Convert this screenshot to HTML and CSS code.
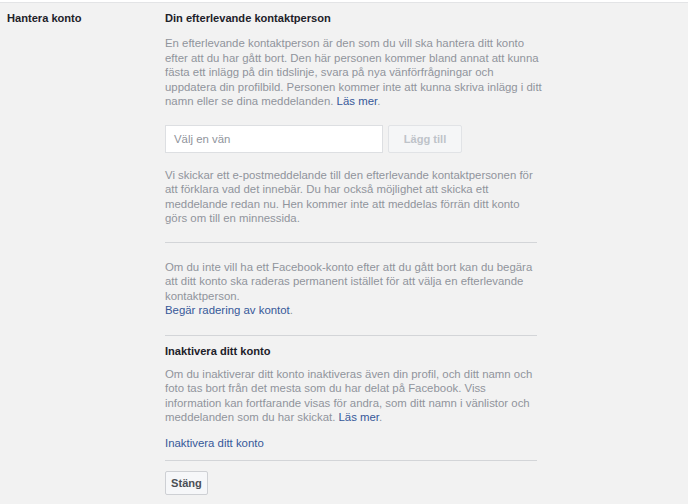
FILE: index.html
```html
<!DOCTYPE html>
<html lang="sv">
<head>
<meta charset="utf-8">
<title>Hantera konto</title>
<link rel="stylesheet" href="styles.css">
</head>
<body>
<div class="page">
  <div class="row">
    <div class="label">Hantera konto</div>
    <div class="content">
      <h3 class="heading">Din efterlevande kontaktperson</h3>
      <p class="text first">En efterlevande kontaktperson är den som du vill ska hantera ditt konto<br>efter att du har gått bort. Den här personen kommer bland annat att kunna<br>fästa ett inlägg på din tidslinje, svara på nya vänförfrågningar och<br>uppdatera din profilbild. Personen kommer inte att kunna skriva inlägg i ditt<br>namn eller se dina meddelanden. <a class="link" href="#">Läs mer</a>.</p>
      <div class="picker">
        <div class="input">Välj en vän</div>
        <button class="btn disabled">Lägg till</button>
      </div>
      <p class="text notice">Vi skickar ett e-postmeddelande till den efterlevande kontaktpersonen för<br>att förklara vad det innebär. Du har också möjlighet att skicka ett<br>meddelande redan nu. Hen kommer inte att meddelas förrän ditt konto<br>görs om till en minnessida.</p>
      <hr class="divider">
      <p class="text delete">Om du inte vill ha ett Facebook-konto efter att du gått bort kan du begära<br>att ditt konto ska raderas permanent istället för att välja en efterlevande<br>kontaktperson.<br><a class="link" href="#">Begär radering av kontot</a>.</p>
      <hr class="divider">
      <h3 class="heading second">Inaktivera ditt konto</h3>
      <p class="text deact">Om du inaktiverar ditt konto inaktiveras även din profil, och ditt namn och<br>foto tas bort från det mesta som du har delat på Facebook. Viss<br>information kan fortfarande visas för andra, som ditt namn i vänlistor och<br>meddelanden som du har skickat. <a class="link" href="#">Läs mer</a>.</p>
      <a class="link action" href="#">Inaktivera ditt konto</a>
      <hr class="divider last">
      <button class="btn close">Stäng</button>
    </div>
  </div>
</div>
</body>
</html>
```
FILE: styles.css
```css
html, body {
  margin: 0;
  padding: 0;
}
body {
  background: #f2f2f2;
  font-family: "Liberation Sans", Arial, sans-serif;
  font-size: 11.4px;
  color: #1d2129;
}
.page {
  border-top: 2px solid #ffffff;
  min-height: 502px;
}
.page::before {
  content: "";
  display: block;
  height: 1px;
  background: #e3e4e6;
}
.row {
  display: flex;
  padding: 7px 0 0 7px;
}
.label {
  width: 158px;
  flex: none;
  font-size: 11.1px;
  font-weight: bold;
  line-height: 16px;
  color: #1d2129;
}
.content {
  width: 372px;
  flex: none;
}
.heading {
  margin: 0;
  font-size: 11.1px;
  font-weight: bold;
  line-height: 16px;
  color: #1d2129;
}
.text {
  margin: 0 -12px 0 0;
  color: #90949c;
  line-height: 14.5px;
  white-space: nowrap;
}
.link {
  color: #365899;
  text-decoration: none;
}
.first {
  margin-top: 10px;
}
.picker {
  display: flex;
  gap: 5px;
  margin-top: 16px;
}
.input {
  height: 26px;
  box-sizing: content-box;
  border: 1px solid #dddfe2;
  background: #ffffff;
  color: #90949c;
  line-height: 26px;
  padding-left: 8px;
  width: 208px;
}
.btn {
  font-family: "Liberation Sans", Arial, sans-serif;
  font-size: 11.1px;
  font-weight: bold;
  border-radius: 2px;
  padding: 0;
  cursor: pointer;
}
.disabled {
  width: 74px;
  height: 28px;
  background: #f5f6f7;
  border: 1px solid #e1e3e6;
  color: #bec3c9;
}
.notice {
  margin-top: 15px;
}
.divider {
  border: 0;
  height: 1px;
  background: #d3d5d8;
  margin: 16px 0 0;
}
.delete {
  margin-top: 17px;
}
.delete + .divider {
  margin-top: 17px;
}
.second {
  margin-top: 7px;
}
.deact {
  margin-top: 8px;
}
.action {
  display: block;
  margin-top: 11px;
  line-height: 14.5px;
}
.last {
  margin-top: 10px;
}
.close {
  margin-top: 10px;
  width: 43px;
  height: 24px;
  background: #f6f7f9;
  border: 1px solid #ced0d4;
  color: #4b4f56;
}
```
